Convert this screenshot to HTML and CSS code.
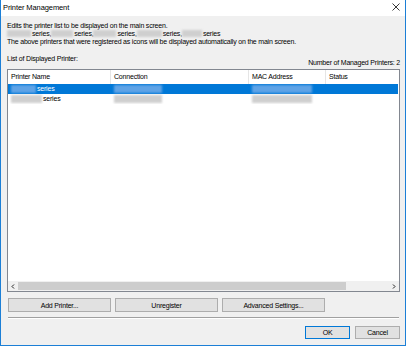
FILE: index.html
```html
<!DOCTYPE html>
<html lang="en">
<head>
  <meta charset="UTF-8">
  <title>Printer Management</title>
  <link rel="stylesheet" href="styles.css">
</head>
<body>
  <div class="window">
    <div class="titlebar">
      <span class="title">Printer Management</span>
      <svg class="close" width="8" height="8" viewBox="0 0 8 8"><path d="M0.5 0.5L7.5 7.5M7.5 0.5L0.5 7.5" stroke="#222" stroke-width="0.9"/></svg>
    </div>

    <div class="dialog">
      <p class="intro">
        Edits the printer list to be displayed on the main screen.<br>
        <span class="masked w24"></span>series,<span class="masked w22"></span>series,<span class="masked w23"></span>series,<span class="masked w25"></span>series,<span class="masked w20"></span>series<br>
        The above printers that were registered as icons will be displayed automatically on the main screen.
      </p>

      <div class="list-head">
        <span class="label">List of Displayed Printer:</span>
        <span class="count">Number of Managed Printers: 2</span>
      </div>

      <div class="listview">
        <div class="lv-row lv-header">
          <div class="cell">Printer Name</div>
          <div class="cell">Connection</div>
          <div class="cell">MAC Address</div>
          <div class="cell">Status</div>
        </div>
        <div class="lv-body">
          <div class="lv-row item selected">
            <div class="cell"><span class="masked w25"></span>series</div>
            <div class="cell"><span class="masked w48"></span></div>
            <div class="cell"><span class="masked w60"></span></div>
            <div class="cell"></div>
          </div>
          <div class="lv-row item">
            <div class="cell"><span class="masked w31"></span>series</div>
            <div class="cell"><span class="masked w48"></span></div>
            <div class="cell"><span class="masked w60"></span></div>
            <div class="cell"></div>
          </div>
        </div>
        <div class="hscroll">
          <div class="arrow"><svg width="4" height="5" viewBox="0 0 4 5"><path d="M3 0.5L1 2.5L3 4.5" fill="none" stroke="#222" stroke-width="1"/></svg></div>
          <div class="track"><div class="thumb"></div></div>
          <div class="arrow"><svg width="4" height="5" viewBox="0 0 4 5"><path d="M1 0.5L3 2.5L1 4.5" fill="none" stroke="#222" stroke-width="1"/></svg></div>
        </div>
      </div>

      <div class="actions">
        <button class="btn wide">Add Printer...</button>
        <button class="btn wide">Unregister</button>
        <button class="btn wide">Advanced Settings...</button>
      </div>

      <div class="separator"></div>

      <div class="footer">
        <button class="btn small default">OK</button>
        <button class="btn small">Cancel</button>
      </div>
    </div>
  </div>
</body>
</html>
```

FILE: styles.css
```css
* {
  box-sizing: border-box;
  margin: 0;
  padding: 0;
}

body {
  font-family: "Liberation Sans", Arial, sans-serif;
  font-size: 7px;
  letter-spacing: -0.2px;
  color: #000;
  background: #fff;
}

.window {
  width: 406px;
  height: 346px;
  display: flex;
  flex-direction: column;
  border: 1px solid #1c7fd6;
  border-top: none;
  background: #f0f0f0;
}

.titlebar {
  height: 16px;
  flex-shrink: 0;
  background: #fff;
  display: flex;
  align-items: center;
  justify-content: space-between;
  padding: 0 5px 2px 2px;
}

.title {
  font-size: 7.5px;
  letter-spacing: -0.1px;
}

.dialog {
  flex: 1;
  display: flex;
  flex-direction: column;
  padding: 6px 5px 0 6px;
}

.intro {
  line-height: 8px;
}

.masked {
  display: inline-block;
  height: 7px;
  vertical-align: -1px;
  background: #cfcfcf;
  filter: blur(0.8px);
  margin-right: 1px;
}

.w20 { width: 20px; }
.w22 { width: 22px; }
.w23 { width: 23px; }
.w24 { width: 24px; }
.w25 { width: 25px; }
.w31 { width: 31px; }
.w48 { width: 48px; }
.w60 { width: 60px; }

.list-head {
  margin-top: 9px;
  height: 12px;
  display: flex;
  justify-content: space-between;
  line-height: 8px;
}

.list-head .count {
  align-self: flex-end;
}

.listview {
  margin-top: 2px;
  height: 223px;
  border: 1px solid #828790;
  background: #fff;
  display: flex;
  flex-direction: column;
}

.lv-row {
  display: grid;
  grid-template-columns: 103px 138px 77px 1fr;
}

.lv-header {
  height: 14px;
  line-height: 14px;
}

.lv-header .cell {
  border-right: 1px solid #e5e5e5;
}

.lv-header .cell:last-child {
  border-right: none;
}

.cell {
  padding-left: 3px;
  white-space: nowrap;
  overflow: hidden;
}

.lv-body {
  flex: 1;
}

.item {
  height: 10px;
  line-height: 10px;
  margin-right: 1px;
}

.item .masked {
  height: 8px;
  vertical-align: -2px;
}

.selected {
  background: #0078d7;
  color: #fff;
}

.selected .masked {
  background: #5fa3e6;
}

.hscroll {
  height: 10px;
  display: flex;
  background: #f0f0f0;
}

.arrow {
  width: 10px;
  display: flex;
  align-items: center;
  justify-content: center;
}

.track {
  flex: 1;
  padding: 1px 0;
}

.thumb {
  width: 328px;
  height: 100%;
  background: #cdcdcd;
}

.actions {
  margin-top: 6px;
  margin-left: 1px;
  display: flex;
  gap: 4px;
}

.btn {
  font-family: inherit;
  font-size: 7px;
  letter-spacing: -0.2px;
  color: #000;
  background: #e1e1e1;
  border: 1px solid #adadad;
}

.btn.wide {
  width: 103px;
  height: 14px;
}

.separator {
  margin: 5px 0 0 1px;
  width: 391px;
  height: 2px;
  border-top: 1px solid #a0a0a0;
  border-bottom: 1px solid #fff;
}

.footer {
  margin-top: 7px;
  display: flex;
  justify-content: flex-end;
  gap: 5px;
}

.btn.small {
  width: 45px;
  height: 13px;
}

.btn.default {
  border-color: #0078d7;
}
```
